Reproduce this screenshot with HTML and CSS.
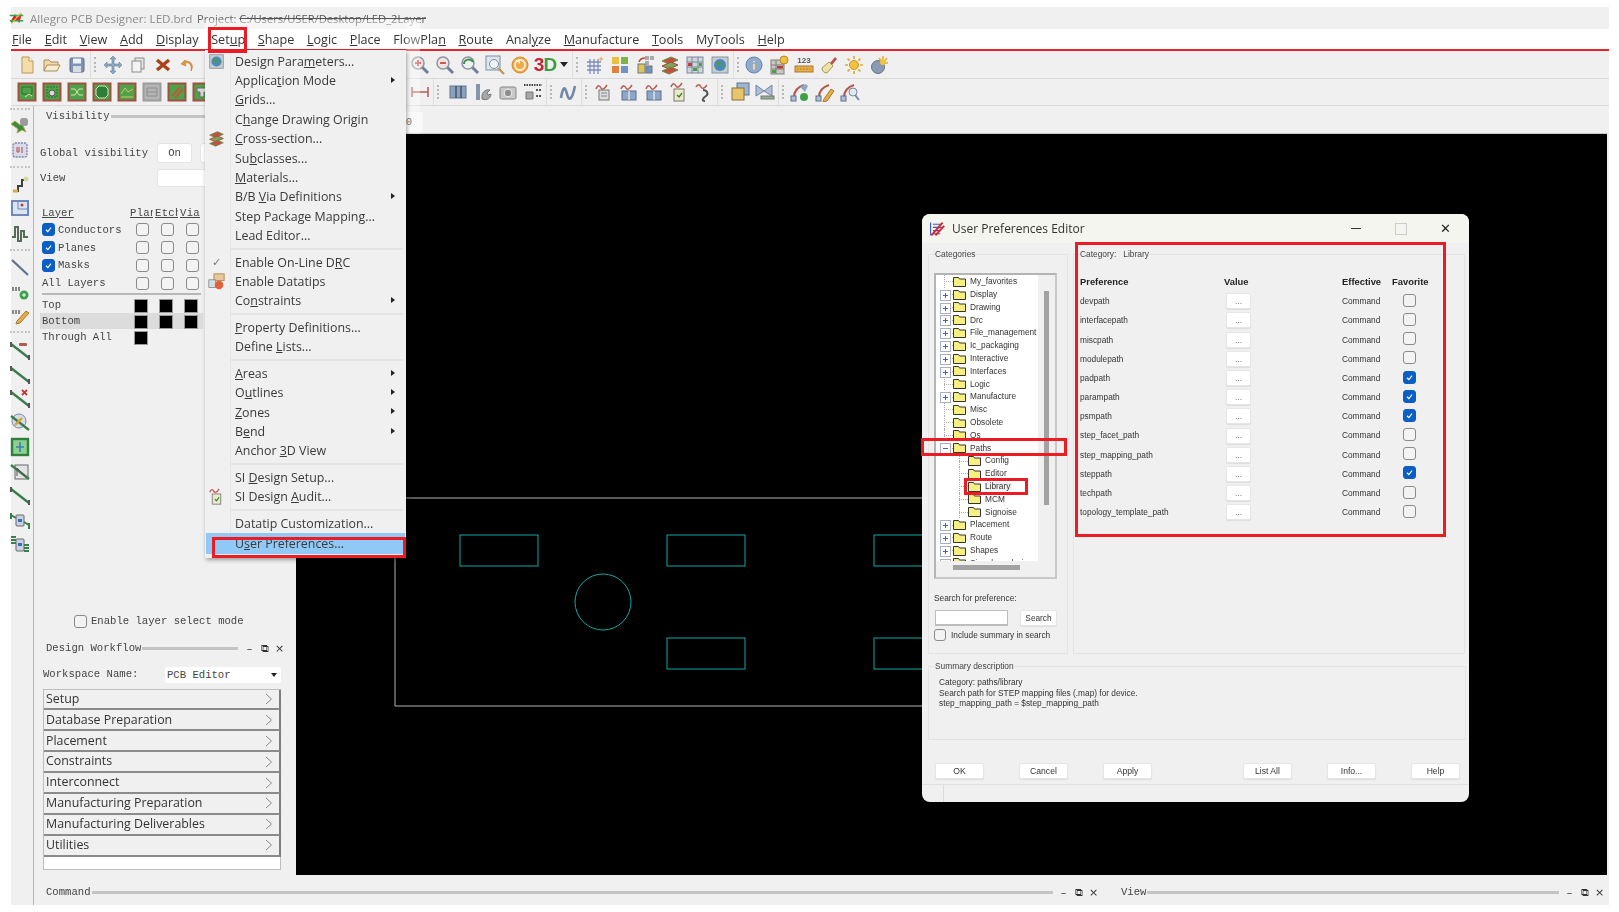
FILE: index.html
```html
<!DOCTYPE html>
<html lang="en">
<head>
<meta charset="utf-8">
<title>Allegro PCB Designer</title>
<link rel="stylesheet" href="styles.css">
</head>
<body>
<svg class="defs" width="0" height="0" aria-hidden="true">
  <defs>
    <symbol id="new" viewBox="0 0 20 20"><path d="M5 2h7l4 4v12H5z" fill="#f6dcab" stroke="#b9975f"/><path d="M12 2v4h4" fill="#fff" stroke="#b9975f"/></symbol>
    <symbol id="open" viewBox="0 0 20 20"><path d="M2 16V5h5l2 2h7v3" fill="#f3d9a8" stroke="#a98c5c"/><path d="M2 16l3-6h13l-3 6z" fill="#f8ecd0" stroke="#a98c5c"/></symbol>
    <symbol id="save" viewBox="0 0 20 20"><rect x="3" y="3" width="14" height="14" rx="1.5" fill="#7f93b5" stroke="#5a6c8c"/><rect x="6" y="3.5" width="8" height="5" fill="#eef1f6"/><rect x="6" y="11" width="8" height="6" fill="#d6dce6"/></symbol>
    <symbol id="move" viewBox="0 0 20 20"><path d="M10 1l3 3h-2v5h5V7l3 3-3 3v-2h-5v5h2l-3 3-3-3h2v-5H4v2l-3-3 3-3v2h5V4H7z" fill="#8ea9c6" stroke="#647f9c" stroke-width=".6"/></symbol>
    <symbol id="copy" viewBox="0 0 20 20"><rect x="7" y="3" width="9" height="11" fill="#e4e4e4" stroke="#8a8a8a"/><rect x="4" y="6" width="9" height="11" fill="#f3f3f3" stroke="#8a8a8a"/></symbol>
    <symbol id="del" viewBox="0 0 20 20"><path d="M4 5l12 10M16 5L4 15" stroke="#a8431a" stroke-width="3.4" fill="none"/></symbol>
    <symbol id="undo" viewBox="0 0 20 20"><path d="M7 5L3 9l5 2-1-3c4-1 7 1 6 8 3-5 1-10-6-10z" fill="#e59a3c" stroke="#b8742a" stroke-width=".6"/></symbol>
    <symbol id="zin" viewBox="0 0 20 20"><path d="M12 12l6 6" stroke="#6d7f99" stroke-width="3"/><circle cx="8" cy="8" r="6" fill="#f3e3de" stroke="#8b95a6" stroke-width="1.5"/><path d="M5 8h6M8 5v6" stroke="#c23a3a" stroke-width="1.6"/></symbol>
    <symbol id="zout" viewBox="0 0 20 20"><path d="M12 12l6 6" stroke="#6d7f99" stroke-width="3"/><circle cx="8" cy="8" r="6" fill="#f3e3de" stroke="#8b95a6" stroke-width="1.5"/><path d="M5 8h6" stroke="#c23a3a" stroke-width="1.6"/></symbol>
    <symbol id="zprev" viewBox="0 0 20 20"><path d="M12 12l6 6" stroke="#6d7f99" stroke-width="3"/><circle cx="8" cy="8" r="6" fill="#eef2ee" stroke="#8b95a6" stroke-width="1.5"/><path d="M4 9c0-5 7-6 9-2" stroke="#3f8f4a" stroke-width="2" fill="none"/></symbol>
    <symbol id="zfit" viewBox="0 0 20 20"><rect x="1" y="1" width="14" height="14" fill="#dde6ee" stroke="#7d8ea3"/><path d="M13 13l6 6" stroke="#c09a55" stroke-width="2.4"/><circle cx="9" cy="9" r="4.5" fill="#eef3f7" stroke="#7d8ea3"/></symbol>
    <symbol id="redo" viewBox="0 0 20 20"><circle cx="10" cy="10" r="8" fill="#f0a94a" stroke="#d98d2c"/><circle cx="10" cy="10" r="5" fill="none" stroke="#fff2dc" stroke-width="1.8"/><path d="M5 5h5v4z" fill="#fff2dc"/></symbol>
    <symbol id="grid" viewBox="0 0 20 20"><path d="M2 7h14M2 11h14M2 15h14M5 4v15M9 4v15M13 4v15" stroke="#7e8db8" stroke-width="1.3"/><path d="M16 1l.8 2.2L19 4l-2.2.8L16 7l-.8-2.2L13 4l2.2-.8z" fill="#e9b36a"/></symbol>
    <symbol id="color" viewBox="0 0 20 20"><rect x="2" y="2" width="7" height="7" fill="#e8c23a"/><rect x="11" y="2" width="7" height="7" fill="#7fb24f"/><rect x="2" y="11" width="7" height="7" fill="#e0823c"/><rect x="11" y="11" width="7" height="7" fill="#6f93c9"/></symbol>
    <symbol id="shapes" viewBox="0 0 20 20"><rect x="10" y="1" width="4" height="4" fill="#aaa"/><rect x="15" y="1" width="4" height="4" fill="#aaa"/><rect x="10" y="6" width="4" height="4" fill="#aaa"/><rect x="3" y="9" width="7" height="9" fill="#d9c65c" stroke="#777"/><rect x="11" y="11" width="6" height="7" fill="#6f93c9" stroke="#777"/><path d="M4 7c1-3 3-4 6-4" stroke="#c2443a" stroke-width="1.4" fill="none"/></symbol>
    <symbol id="stack" viewBox="0 0 20 20"><path d="M2 6l9-4 7 3-9 4z" fill="#c2503e" stroke="#6b8c4a"/><path d="M2 11l9-4 7 3-9 4z" fill="#7fa35a" stroke="#a3462f"/><path d="M2 16l9-4 7 3-9 4z" fill="#c2503e" stroke="#6b8c4a"/></symbol>
    <symbol id="table" viewBox="0 0 20 20"><rect x="2" y="2" width="16" height="16" fill="#cfd5dc" stroke="#7b8796"/><path d="M2 7h16M2 12h16M7 2v16M13 2v16" stroke="#7b8796"/><rect x="3" y="8" width="4" height="3" fill="#c23a3a"/><rect x="8" y="13" width="4" height="3" fill="#4aa04a"/><rect x="14" y="8" width="3" height="3" fill="#4aa04a"/></symbol>
    <symbol id="globe" viewBox="0 0 20 20"><rect x="2" y="2" width="16" height="16" fill="#c6ccd4" stroke="#8a94a1"/><circle cx="10" cy="10" r="6" fill="#4b89b8"/><path d="M6 8l4-2 1 3-3 3zM12 11l3-1-1 4z" fill="#4f9b52"/></symbol>
    <symbol id="info" viewBox="0 0 20 20"><circle cx="10" cy="10" r="8" fill="#8fabd0" stroke="#6b83a8"/><path d="M10 6v1.6M10 9v5.5" stroke="#f5d88a" stroke-width="2"/></symbol>
    <symbol id="tinfo" viewBox="0 0 20 20"><rect x="2" y="5" width="13" height="14" fill="#c9c9c0" stroke="#7f7f7f"/><path d="M2 10h13M2 14h13M7 5v14" stroke="#7f7f7f"/><rect x="8" y="11" width="6" height="2.5" fill="#c23a3a"/><rect x="3" y="15" width="4" height="3" fill="#4aa04a"/><circle cx="15" cy="5" r="4" fill="#f0c040" stroke="#b88a20"/></symbol>
    <symbol id="num" viewBox="0 0 20 20"><rect x="1" y="11" width="18" height="6" fill="#e5ad4a" stroke="#a87a2a"/><path d="M3 14h14" stroke="#a87a2a" stroke-dasharray="1.5 1.5"/></symbol>
    <symbol id="brush" viewBox="0 0 20 20"><path d="M11 8l5-6 2 2-5 6z" fill="#b5574a"/><path d="M3 13l7-6 4 4-6 7c-3 0-5-2-5-5z" fill="#efe2a8" stroke="#a89a5a"/></symbol>
    <symbol id="sun" viewBox="0 0 20 20"><circle cx="10" cy="10" r="4.5" fill="#f3c23c" stroke="#c9912a"/><path d="M10 1v3M10 16v3M1 10h3M16 10h3M3.6 3.6l2.1 2.1M14.3 14.3l2.1 2.1M3.6 16.4l2.1-2.1M14.3 5.7l2.1-2.1" stroke="#e5a83a" stroke-width="1.7"/></symbol>
    <symbol id="sun2" viewBox="0 0 20 20"><circle cx="9" cy="12" r="6.5" fill="#8a9ab0" stroke="#64748a"/><path d="M14 1v3M10 3l1.6 2M18 3l-1.6 2M19 8h-3" stroke="#e5a83a" stroke-width="1.5"/><circle cx="14" cy="7" r="3" fill="#f3c23c"/></symbol>
    <symbol id="gb1" viewBox="0 0 20 20"><rect x="1.5" y="1.5" width="17" height="17" fill="#4ea24a" stroke="#a24f42" stroke-width="2"/><path d="M5 5h10v7H5z" fill="none" stroke="#2c6e2c"/><path d="M8 15l4-3 3 2" stroke="#d8e8a8" fill="none"/></symbol>
    <symbol id="gb2" viewBox="0 0 20 20"><rect x="1.5" y="1.5" width="17" height="17" fill="#4ea24a" stroke="#a24f42" stroke-width="2"/><path d="M5 5h10v10H5z" fill="none" stroke="#2c6e2c" stroke-dasharray="2 1"/><circle cx="10" cy="11" r="3" fill="#d8d8d8" stroke="#555"/></symbol>
    <symbol id="gb3" viewBox="0 0 20 20"><rect x="1.5" y="1.5" width="17" height="17" fill="#4ea24a" stroke="#a24f42" stroke-width="2"/><path d="M4 7h4l4 6h4M4 13h4l4-6h4" fill="none" stroke="#d8e8a8"/></symbol>
    <symbol id="gb4" viewBox="0 0 20 20"><rect x="1.5" y="1.5" width="17" height="17" fill="#4ea24a" stroke="#a24f42" stroke-width="2"/><path d="M7 4h6l3 3v6l-3 3H7l-3-3V7z" fill="#2f7d3a" stroke="#cfe8b0"/></symbol>
    <symbol id="gb5" viewBox="0 0 20 20"><rect x="1.5" y="1.5" width="17" height="17" fill="#4ea24a" stroke="#a24f42" stroke-width="2"/><path d="M4 12l4-6 3 4 5-3M4 15h12" fill="none" stroke="#d8c060"/></symbol>
    <symbol id="gdim" viewBox="0 0 20 20"><rect x="1.5" y="1.5" width="17" height="17" fill="#b5b5b5" stroke="#9c9c9c" stroke-width="2"/><path d="M5 6h10v8H5zM5 10h10" fill="none" stroke="#8a8a8a"/></symbol>
    <symbol id="gslash" viewBox="0 0 20 20"><rect x="1.5" y="1.5" width="17" height="17" fill="#4ea24a" stroke="#a24f42" stroke-width="2"/><path d="M5 14l8-9M8 16l8-9" stroke="#bf5a3a" stroke-width="2"/></symbol>
    <symbol id="gt" viewBox="0 0 20 20"><rect x="1.5" y="1.5" width="17" height="17" fill="#4ea24a" stroke="#a24f42" stroke-width="2"/><path d="M5 6h10v4h-3v5H8v-5H5z" fill="#d8d8d8" stroke="#666"/></symbol>
    <symbol id="dim" viewBox="0 0 20 20"><path d="M2 5v10M18 5v10" stroke="#b5645a" stroke-width="1.6"/><path d="M2 10h16" stroke="#b5645a" stroke-width="1.6"/></symbol>
    <symbol id="book" viewBox="0 0 20 20"><rect x="2" y="4" width="16" height="12" fill="#8ba2bf" stroke="#64748a"/><path d="M8 4v12M13 4v12" stroke="#46566c" stroke-width="1.5"/></symbol>
    <symbol id="tool" viewBox="0 0 20 20"><path d="M3 2h4v16H3z" fill="#8696aa"/><path d="M9 14c0-4 4-7 8-6l-3 3 1 2 3-1c0 4-4 7-9 5z" fill="#a7a7a7" stroke="#777"/></symbol>
    <symbol id="camera" viewBox="0 0 20 20"><rect x="2" y="5" width="16" height="12" rx="1.5" fill="#c9c9c9" stroke="#858585"/><circle cx="10" cy="11" r="3.8" fill="#8d8d8d" stroke="#eee"/></symbol>
    <symbol id="bits" viewBox="0 0 20 20"><path d="M1 3h18" stroke="#444" stroke-dasharray="1.5 1" stroke-width="2"/><path d="M3 10h7v7H3z" fill="#a7a7a7" stroke="#777"/><path d="M13 8h6M13 14h6" stroke="#555" stroke-width="2" stroke-dasharray="2 1"/></symbol>
    <symbol id="net" viewBox="0 0 20 20"><path d="M3 16c2-12 4-12 6-4s5 6 8-8" stroke="#7388a6" stroke-width="2.6" fill="none"/></symbol>
    <symbol id="wire" viewBox="0 0 20 20"><path d="M2 7c2-5 4-3 5-1s3 2 6-3" stroke="#bc5a50" stroke-width="1.5" fill="none"/><rect x="5" y="8" width="10" height="10" fill="#dcdcdc" stroke="#777"/><path d="M7 11h6M7 14h6" stroke="#888"/></symbol>
    <symbol id="wire2" viewBox="0 0 20 20"><path d="M2 7c2-5 4-3 5-1s3 2 6-3" stroke="#bc5a50" stroke-width="1.5" fill="none"/><rect x="3" y="9" width="14" height="9" fill="#8fa7c6" stroke="#5c6f8c"/><path d="M10 9v9" stroke="#fff"/></symbol>
    <symbol id="wire3" viewBox="0 0 20 20"><path d="M2 5c2-4 4-2 5 0s3 2 6-2" stroke="#bc5a50" stroke-width="1.5" fill="none"/><path d="M9 8c4 0 6 4 3 6s-5 5-1 5" stroke="#555" stroke-width="2" fill="none"/></symbol>
    <symbol id="pages" viewBox="0 0 20 20"><rect x="7" y="1" width="12" height="12" fill="#9db4d3" stroke="#64748a"/><rect x="2" y="6" width="12" height="12" fill="#e9c46a" stroke="#8a7040"/></symbol>
    <symbol id="bow" viewBox="0 0 20 20"><path d="M1 3l8 6 8-6v11l-8-5-8 5z" fill="#aebfd6" stroke="#7388a6"/><rect x="6" y="14" width="13" height="3" fill="#9a9" stroke="#777"/></symbol>
    <symbol id="via" viewBox="0 0 20 20"><path d="M4 15c0-7 4-10 10-12" stroke="#b5584a" stroke-width="2" fill="none"/><path d="M10 5l6-3 2 2-3 6z" fill="#8fa7c6"/><rect x="1" y="14" width="5" height="5" fill="#aebfd6" stroke="#5c6f8c"/><circle cx="14" cy="15" r="4" fill="#3fa04a"/></symbol>
    <symbol id="via2" viewBox="0 0 20 20"><path d="M4 15c0-7 4-10 10-12" stroke="#b5584a" stroke-width="2" fill="none"/><rect x="1" y="14" width="5" height="5" fill="#aebfd6" stroke="#5c6f8c"/><path d="M9 17l7-10 3 2-7 10-4 1z" fill="#e5ad4a" stroke="#a87a2a"/></symbol>
    <symbol id="via3" viewBox="0 0 20 20"><path d="M4 15c0-7 4-10 10-12" stroke="#b5584a" stroke-width="2" fill="none"/><rect x="1" y="14" width="5" height="5" fill="#aebfd6" stroke="#5c6f8c"/><circle cx="13" cy="10" r="4" fill="#e4e8ee" stroke="#7388a6"/><path d="M15 13l4 5" stroke="#7388a6" stroke-width="2"/></symbol>
    <symbol id="lay" viewBox="0 0 20 20"><path d="M1 8l7 5-1 4 5-3 4 2-3-6 2-3-5 2-5-4z" fill="#3d8c3d" stroke="#b8a44a"/><rect x="10" y="2" width="8" height="8" rx="3" fill="#9b9b9b"/></symbol>
    <symbol id="u1" viewBox="0 0 20 20"><rect x="3" y="3" width="14" height="14" rx="2" fill="#d9dce8" stroke="#7d86a8" stroke-dasharray="2 1" stroke-width="1.4"/><path d="M7 7v5h2V7M12 7v6" stroke="#b04a4a" fill="none"/></symbol>
    <symbol id="trace" viewBox="0 0 20 20"><path d="M3 17h5v-5h4V6h5" stroke="#3d3d3d" stroke-width="2" fill="none"/><path d="M3 17h5" stroke="#d8b030" stroke-width="3"/><circle cx="16" cy="5" r="2.5" fill="#d8d8a0"/></symbol>
    <symbol id="plane" viewBox="0 0 20 20"><path d="M2 3h16v14H2z" fill="#dbe4f2" stroke="#6f88b8" stroke-width="2"/><path d="M8 4v7h9" stroke="#6f88b8" fill="none"/><circle cx="12" cy="7" r="1.5" fill="#c23a3a"/></symbol>
    <symbol id="pulse" viewBox="0 0 20 20"><path d="M2 14h3V4h3v14h3V8h3v6h4" stroke="#5a6a5a" stroke-width="2" fill="none"/></symbol>
    <symbol id="line" viewBox="0 0 20 20"><path d="M2 3l16 15" stroke="#5f7391" stroke-width="2.2"/></symbol>
    <symbol id="abcp" viewBox="0 0 20 20"><path d="M2 8h9" stroke="#888" stroke-width="4" stroke-dasharray="2 1"/><circle cx="14" cy="14" r="4.5" fill="#3fa04a"/><path d="M12 14h4M14 12v4" stroke="#fff"/></symbol>
    <symbol id="abce" viewBox="0 0 20 20"><path d="M2 7h9" stroke="#888" stroke-width="4" stroke-dasharray="2 1"/><path d="M7 16l9-10 3 2-9 10-4 1z" fill="#e5ad4a" stroke="#a87a2a"/></symbol>
    <symbol id="n1" viewBox="0 0 20 20"><path d="M1 4l18 14" stroke="#3b7d4a" stroke-width="2.4"/><path d="M1 2v5M19 15v5" stroke="#555" stroke-width="2"/><rect x="9" y="3" width="8" height="3" rx="1" fill="#b5584a"/></symbol>
    <symbol id="n2" viewBox="0 0 20 20"><path d="M1 4l18 14" stroke="#3b7d4a" stroke-width="2.4"/><path d="M1 2v5M19 15v5" stroke="#555" stroke-width="2"/></symbol>
    <symbol id="n3" viewBox="0 0 20 20"><path d="M1 4l18 14" stroke="#3b7d4a" stroke-width="2.4"/><path d="M1 2v5M19 15v5" stroke="#555" stroke-width="2"/><path d="M12 2l5 5M17 2l-5 5" stroke="#c23a3a" stroke-width="1.8"/></symbol>
    <symbol id="n4" viewBox="0 0 20 20"><circle cx="9" cy="9" r="7" fill="#d8dce4" stroke="#7d86a8"/><path d="M1 4l18 14" stroke="#3b7d4a" stroke-width="2.4"/><path d="M5 13l7-7" stroke="#d8a030" stroke-width="2.4"/></symbol>
    <symbol id="n5" viewBox="0 0 20 20"><rect x="2" y="2" width="16" height="16" fill="#8fcf8f" stroke="#2f7f3f" stroke-width="2.4"/><path d="M10 5v10M6 10h8" stroke="#3a7fb8" stroke-width="1.6"/></symbol>
    <symbol id="n6" viewBox="0 0 20 20"><rect x="5" y="4" width="13" height="14" fill="#e4e4e4" stroke="#666"/><path d="M1 4l18 14" stroke="#3b7d4a" stroke-width="2.4"/><path d="M7 15V7l9 9" stroke="#555" fill="none"/></symbol>
    <symbol id="n7" viewBox="0 0 20 20"><rect x="6" y="5" width="8" height="11" rx="1" fill="#c8d2e4" stroke="#666"/><rect x="8" y="9" width="4" height="3" fill="#3a6fb8"/><path d="M1 3v6M19 13v6M1 5l5 3M14 12l5 3" stroke="#3b7d4a" stroke-width="2"/></symbol>
    <symbol id="n8" viewBox="0 0 20 20"><rect x="6" y="5" width="8" height="12" rx="1" fill="#c8d2e4" stroke="#666"/><rect x="8" y="9" width="4" height="3" fill="#3a6fb8"/><path d="M1 3h5M1 6h5M1 9h5M14 11h5M14 14h5M14 17h5" stroke="#3b7d4a" stroke-width="2"/></symbol>
    <symbol id="datatip" viewBox="0 0 20 20"><rect x="7" y="1" width="12" height="8" fill="#e9c89a" stroke="#a8844f"/><rect x="1" y="8" width="8" height="9" fill="#d8dce4" stroke="#8a8a8a"/><circle cx="13" cy="14" r="5" fill="#e2603a"/></symbol>
    <symbol id="audit" viewBox="0 0 20 20"><path d="M2 5c2-5 4-3 5-1s3 2 6-3" stroke="#bc5a50" stroke-width="1.5" fill="none"/><rect x="5" y="7" width="10" height="12" fill="#efe9c8" stroke="#777"/><path d="M8 13l2 2 3-4" stroke="#2e8a3c" stroke-width="1.4" fill="none"/></symbol>
    <symbol id="logo" viewBox="0 0 20 20"><path d="M2 2v16M5 4h11M5 8h11M5 12h9M5 16h9" stroke="#3f56c0" stroke-width="1.4"/><path d="M3 18L17 2M8 18L19 6" stroke="#d9252a" stroke-width="2.4"/></symbol>
    <symbol id="appicon" viewBox="0 0 20 20"><path d="M2 14l6-10 3 5 6-6-3 13-5-5-5 5z" fill="#d9252a"/><path d="M1 6h18M1 13h18" stroke="#2ea84a" stroke-width="2"/><path d="M3 17L16 2" stroke="#e8c23a" stroke-width="1.4"/></symbol>
    <symbol id="folder" viewBox="0 0 13 11"><path d="M.5 10.5V1.5h5l1 1.5h6v7.5z" fill="#f7ef82" stroke="#333" stroke-width="1"/></symbol>
    <symbol id="tick" viewBox="0 0 13 13"><path d="M3.5 6.8l2.2 2.2 3.8-4.6" fill="none" stroke="#fff" stroke-width="1.3"/></symbol>
    <symbol id="chev" viewBox="0 0 8 12"><path d="M1 1l5.5 5L1 11" fill="none" stroke="#8a8a8a" stroke-width="1"/></symbol>
  </defs>
</svg>

<div class="app">
  <header class="titlebar">
    <svg class="app-icon"><use href="#appicon"/></svg>
    <span class="title-main">Allegro PCB Designer: LED.brd</span>
    <span class="title-project">Project: <s>C:/Users/USER/Desktop/LED_2Layer</s></span>
  </header>

  <nav class="menubar">
    <span class="m-file"><u>F</u>ile</span>
    <span><u>E</u>dit</span>
    <span><u>V</u>iew</span>
    <span><u>A</u>dd</span>
    <span><u>D</u>isplay</span>
    <span>Set<u>u</u>p</span>
    <span><u>S</u>hape</span>
    <span><u>L</u>ogic</span>
    <span><u>P</u>lace</span>
    <span>FlowPla<u>n</u></span>
    <span><u>R</u>oute</span>
    <span>Anal<u>y</u>ze</span>
    <span><u>M</u>anufacture</span>
    <span><u>T</u>ools</span>
    <span>MyTools</span>
    <span><u>H</u>elp</span>
  </nav>

  <div class="toolbar">
    <i class="tb"><svg><use href="#new"/></svg></i>
    <i class="tb"><svg><use href="#open"/></svg></i>
    <i class="tb"><svg><use href="#save"/></svg></i>
    <i class="sep s11"></i>
    <i class="tb"><svg><use href="#move"/></svg></i>
    <i class="tb"><svg><use href="#copy"/></svg></i>
    <i class="tb"><svg><use href="#del"/></svg></i>
    <i class="tb"><svg><use href="#undo"/></svg></i>
    <i class="tb-hidden"></i>
    <i class="tb"><svg><use href="#zin"/></svg></i>
    <i class="tb"><svg><use href="#zout"/></svg></i>
    <i class="tb"><svg><use href="#zprev"/></svg></i>
    <i class="tb"><svg><use href="#zfit"/></svg></i>
    <i class="tb"><svg><use href="#redo"/></svg></i>
    <i class="tb three-d"><b class="r">3</b><b class="g">D</b></i>
    <i class="drop"></i>
    <i class="sep s11"></i>
    <i class="tb"><svg><use href="#grid"/></svg></i>
    <i class="tb"><svg><use href="#color"/></svg></i>
    <i class="tb"><svg><use href="#shapes"/></svg></i>
    <i class="tb"><svg><use href="#stack"/></svg></i>
    <i class="tb"><svg><use href="#table"/></svg></i>
    <i class="tb"><svg><use href="#globe"/></svg></i>
    <i class="sep s9"></i>
    <i class="tb"><svg><use href="#info"/></svg></i>
    <i class="tb"><svg><use href="#tinfo"/></svg></i>
    <i class="tb num-icon"><small>123</small><svg><use href="#num"/></svg></i>
    <i class="tb"><svg><use href="#brush"/></svg></i>
    <i class="tb"><svg><use href="#sun"/></svg></i>
    <i class="tb"><svg><use href="#sun2"/></svg></i>
  </div>

  <div class="toolbar">
    <i class="tb"><svg><use href="#gb1"/></svg></i>
    <i class="tb"><svg><use href="#gb2"/></svg></i>
    <i class="tb"><svg><use href="#gb3"/></svg></i>
    <i class="tb"><svg><use href="#gb4"/></svg></i>
    <i class="tb"><svg><use href="#gb5"/></svg></i>
    <i class="tb"><svg><use href="#gdim"/></svg></i>
    <i class="tb"><svg><use href="#gslash"/></svg></i>
    <i class="tb"><svg><use href="#gt"/></svg></i>
    <i class="tb-hidden2"></i>
    <i class="tb"><svg><use href="#dim"/></svg></i>
    <i class="sep s13"></i>
    <i class="tb"><svg><use href="#book"/></svg></i>
    <i class="tb"><svg><use href="#tool"/></svg></i>
    <i class="tb"><svg><use href="#camera"/></svg></i>
    <i class="tb"><svg><use href="#bits"/></svg></i>
    <i class="sep s10"></i>
    <i class="tb"><svg><use href="#net"/></svg></i>
    <i class="sep s11"></i>
    <i class="tb"><svg><use href="#wire"/></svg></i>
    <i class="tb"><svg><use href="#wire2"/></svg></i>
    <i class="tb"><svg><use href="#wire2"/></svg></i>
    <i class="tb"><svg><use href="#audit"/></svg></i>
    <i class="tb"><svg><use href="#wire3"/></svg></i>
    <i class="sep s11"></i>
    <i class="tb"><svg><use href="#pages"/></svg></i>
    <i class="tb"><svg><use href="#bow"/></svg></i>
    <i class="sep s10"></i>
    <i class="tb"><svg><use href="#via"/></svg></i>
    <i class="tb"><svg><use href="#via2"/></svg></i>
    <i class="tb"><svg><use href="#via3"/></svg></i>
  </div>

  <div class="work">
    <aside class="strip">
      <i class="grip"></i>
      <svg class="st"><use href="#lay"/></svg>
      <svg class="st"><use href="#u1"/></svg>
      <i class="grip"></i>
      <svg class="st"><use href="#trace"/></svg>
      <svg class="st"><use href="#plane"/></svg>
      <svg class="st"><use href="#pulse"/></svg>
      <i class="grip"></i>
      <svg class="st"><use href="#line"/></svg>
      <svg class="st"><use href="#abcp"/></svg>
      <svg class="st"><use href="#abce"/></svg>
      <i class="grip"></i>
      <svg class="st"><use href="#n1"/></svg>
      <svg class="st"><use href="#n2"/></svg>
      <svg class="st"><use href="#n3"/></svg>
      <svg class="st"><use href="#n4"/></svg>
      <svg class="st"><use href="#n5"/></svg>
      <svg class="st"><use href="#n6"/></svg>
      <svg class="st"><use href="#n2"/></svg>
      <svg class="st"><use href="#n7"/></svg>
      <svg class="st"><use href="#n8"/></svg>
    </aside>

    <div class="main">
      <div class="upper">
        <section class="panel">
          <div class="dock-head vis-head"><span>Visibility</span><i class="rule"></i></div>

          <div class="global-row">
            <span class="global-label">Global visibility</span>
            <span class="flat-btn">On</span>
            <span class="flat-btn off">Off</span>
          </div>
          <div class="view-row">
            <span class="view-label">View</span>
            <span class="view-field"></span>
          </div>

          <div class="layers">
            <u>Layer</u><u class="clip">Plan</u><u class="clip">Etch</u><u class="clip">Via</u>
            <span>
              <i class="cb on"><svg><use href="#tick"/></svg></i>Conductors</span>
            <i class="cb c"></i><i class="cb c"></i><i class="cb c"></i>
            <span>
              <i class="cb on"><svg><use href="#tick"/></svg></i>Planes</span>
            <i class="cb c"></i><i class="cb c"></i><i class="cb c"></i>
            <span>
              <i class="cb on"><svg><use href="#tick"/></svg></i>Masks</span>
            <i class="cb c"></i><i class="cb c"></i><i class="cb c"></i>
            <span>All Layers</span>
            <i class="cb c"></i><i class="cb c"></i><i class="cb c"></i>
          </div>
          <div class="layers-rule"></div>
          <div class="subclasses">
            <span>Top</span><i class="sq"></i><i class="sq"></i><i class="sq"></i>
            <span class="sel">Bottom</span><i class="sq sel"></i><i class="sq sel"></i><i class="sq sel"></i>
            <span>Through All</span><i class="sq"></i><i></i><i></i>
          </div>

          <label class="enable-row"><i class="cb"></i>Enable layer select mode</label>

          <div class="dock-head wf-head">
            <span>Design Workflow</span><i class="rule"></i>
            <span class="dock-ctl">–</span><span class="dock-ctl">⧉</span><span class="dock-ctl">×</span>
          </div>
          <div class="workspace">
            <span>Workspace Name:</span>
            <span class="select">PCB Editor<i class="select-arrow"></i></span>
          </div>
          <ul class="workflow">
            <li>Setup<svg><use href="#chev"/></svg></li>
            <li>Database Preparation<svg><use href="#chev"/></svg></li>
            <li>Placement<svg><use href="#chev"/></svg></li>
            <li>Constraints<svg><use href="#chev"/></svg></li>
            <li>Interconnect<svg><use href="#chev"/></svg></li>
            <li>Manufacturing Preparation<svg><use href="#chev"/></svg></li>
            <li>Manufacturing Deliverables<svg><use href="#chev"/></svg></li>
            <li>Utilities<svg><use href="#chev"/></svg></li>
          </ul>
          <div class="workflow-tail"></div>
        </section>

        <section class="canvas-col">
          <div class="canvas-top"><span class="canvas-field">0</span></div>
          <div class="canvas">
            <svg class="board" viewBox="0 0 1311 741">
              <path class="outline" d="M99 364H640M99 364V572H640"/>
              <rect class="pad" x="164" y="401" width="78" height="31"/>
              <rect class="pad" x="371" y="401" width="78" height="31"/>
              <rect class="pad" x="578" y="401" width="78" height="31"/>
              <rect class="pad" x="371" y="504" width="78" height="31"/>
              <rect class="pad" x="578" y="504" width="78" height="31"/>
              <circle class="pad" cx="307" cy="468" r="28"/>
            </svg>
          </div>
        </section>
      </div>

      <footer class="cmdbar">
        <div class="cmd-left dock-head">
          <span>Command</span><i class="rule"></i>
          <span class="dock-ctl">–</span><span class="dock-ctl">⧉</span><span class="dock-ctl">×</span>
        </div>
        <div class="cmd-right dock-head">
          <span>View</span><i class="rule"></i>
          <span class="dock-ctl">–</span><span class="dock-ctl">⧉</span><span class="dock-ctl">×</span>
        </div>
      </footer>
    </div>
  </div>

  <div class="menu-ghost"></div>

  <div class="menu">
    <div class="mi"><svg class="mic"><use href="#globe"/></svg><span>Design Para<u>m</u>eters...</span></div>
    <div class="mi sub"><i class="mic"></i><span>Applica<u>t</u>ion Mode</span></div>
    <div class="mi"><i class="mic"></i><span><u>G</u>rids...</span></div>
    <div class="mi"><i class="mic"></i><span>C<u>h</u>ange Drawing Origin</span></div>
    <div class="mi"><svg class="mic"><use href="#stack"/></svg><span><u>C</u>ross-section...</span></div>
    <div class="mi"><i class="mic"></i><span>Su<u>b</u>classes...</span></div>
    <div class="mi"><i class="mic"></i><span><u>M</u>aterials...</span></div>
    <div class="mi sub"><i class="mic"></i><span>B/B <u>V</u>ia Definitions</span></div>
    <div class="mi"><i class="mic"></i><span>Step Package Mapping...</span></div>
    <div class="mi"><i class="mic"></i><span>Lead Editor...</span></div>
    <div class="msep"></div>
    <div class="mi"><i class="mic check">✓</i><span>Enable On-Line D<u>R</u>C</span></div>
    <div class="mi"><svg class="mic"><use href="#datatip"/></svg><span>Enable Datatips</span></div>
    <div class="mi sub"><i class="mic"></i><span>Co<u>n</u>straints</span></div>
    <div class="msep"></div>
    <div class="mi"><i class="mic"></i><span><u>P</u>roperty Definitions...</span></div>
    <div class="mi"><i class="mic"></i><span>Define <u>L</u>ists...</span></div>
    <div class="msep"></div>
    <div class="mi sub"><i class="mic"></i><span><u>A</u>reas</span></div>
    <div class="mi sub"><i class="mic"></i><span>O<u>u</u>tlines</span></div>
    <div class="mi sub"><i class="mic"></i><span><u>Z</u>ones</span></div>
    <div class="mi sub"><i class="mic"></i><span>B<u>e</u>nd</span></div>
    <div class="mi"><i class="mic"></i><span>Anchor <u>3</u>D View</span></div>
    <div class="msep"></div>
    <div class="mi"><i class="mic"></i><span>SI <u>D</u>esign Setup...</span></div>
    <div class="mi"><svg class="mic"><use href="#audit"/></svg><span>SI Design <u>A</u>udit...</span></div>
    <div class="msep"></div>
    <div class="mi"><i class="mic"></i><span>Datatip Customization...</span></div>
    <div class="mi active"><i class="mic"></i><span>U<u>s</u>er Preferences...</span></div>
  </div>
</div>

<div class="dialog">
  <div class="dlg-title">
    <svg class="dlg-logo"><use href="#logo"/></svg>
    <span class="dlg-name">User Preferences Editor</span>
    <span class="win-btn min"></span>
    <span class="win-btn max"></span>
    <span class="win-btn close">✕</span>
  </div>
  <div class="dlg-body">
    <div class="dlg-top">
      <fieldset class="group cats">
        <legend>Categories</legend>
        <div class="tree">
          <div class="tree-top">
            <ul class="tree-list">
              <li><i class="tx"></i><svg><use href="#folder"/></svg>My_favorites</li>
              <li><i class="tx plus"></i><svg><use href="#folder"/></svg>Display</li>
              <li><i class="tx plus"></i><svg><use href="#folder"/></svg>Drawing</li>
              <li><i class="tx plus"></i><svg><use href="#folder"/></svg>Drc</li>
              <li><i class="tx plus"></i><svg><use href="#folder"/></svg>File_management</li>
              <li><i class="tx plus"></i><svg><use href="#folder"/></svg>Ic_packaging</li>
              <li><i class="tx plus"></i><svg><use href="#folder"/></svg>Interactive</li>
              <li><i class="tx plus"></i><svg><use href="#folder"/></svg>Interfaces</li>
              <li><i class="tx"></i><svg><use href="#folder"/></svg>Logic</li>
              <li><i class="tx plus"></i><svg><use href="#folder"/></svg>Manufacture</li>
              <li><i class="tx"></i><svg><use href="#folder"/></svg>Misc</li>
              <li><i class="tx"></i><svg><use href="#folder"/></svg>Obsolete</li>
              <li><i class="tx"></i><svg><use href="#folder"/></svg>Os</li>
              <li><i class="tx minus"></i><svg><use href="#folder"/></svg>Paths</li>
              <li class="lv2"><i class="tx"></i><svg><use href="#folder"/></svg>Config</li>
              <li class="lv2"><i class="tx"></i><svg><use href="#folder"/></svg>Editor</li>
              <li class="lv2 picked"><i class="tx"></i><svg><use href="#folder"/></svg><span>Library</span></li>
              <li class="lv2"><i class="tx"></i><svg><use href="#folder"/></svg>MCM</li>
              <li class="lv2"><i class="tx"></i><svg><use href="#folder"/></svg>Signoise</li>
              <li><i class="tx plus"></i><svg><use href="#folder"/></svg>Placement</li>
              <li><i class="tx plus"></i><svg><use href="#folder"/></svg>Route</li>
              <li><i class="tx plus"></i><svg><use href="#folder"/></svg>Shapes</li>
              <li><i class="tx plus"></i><svg><use href="#folder"/></svg>Signal_analysis</li>
            </ul>
            <div class="vscroll"><i></i></div>
          </div>
          <div class="hscroll"><i></i></div>
        </div>
        <div class="search-label">Search for preference:</div>
        <div class="search-row"><span class="search-input"></span><span class="btn search-btn">Search</span></div>
        <label class="include"><i class="cb small"></i>Include summary in search</label>
      </fieldset>

      <fieldset class="group prefs">
        <legend>Category:&nbsp;&nbsp; Library</legend>
        <div class="pref-grid">
          <b>Preference</b><b class="val-h">Value</b><b>Effective</b><b class="fav-h">Favorite</b>
          <span>devpath</span><span class="btn dots">...</span><span>Command</span><i class="cb"></i>
          <span>interfacepath</span><span class="btn dots">...</span><span>Command</span><i class="cb"></i>
          <span>miscpath</span><span class="btn dots">...</span><span>Command</span><i class="cb"></i>
          <span>modulepath</span><span class="btn dots">...</span><span>Command</span><i class="cb"></i>
          <span>padpath</span><span class="btn dots">...</span><span>Command</span><i class="cb on"><svg><use href="#tick"/></svg></i>
          <span>parampath</span><span class="btn dots">...</span><span>Command</span><i class="cb on"><svg><use href="#tick"/></svg></i>
          <span>psmpath</span><span class="btn dots">...</span><span>Command</span><i class="cb on"><svg><use href="#tick"/></svg></i>
          <span>step_facet_path</span><span class="btn dots">...</span><span>Command</span><i class="cb"></i>
          <span>step_mapping_path</span><span class="btn dots">...</span><span>Command</span><i class="cb"></i>
          <span>steppath</span><span class="btn dots">...</span><span>Command</span><i class="cb on"><svg><use href="#tick"/></svg></i>
          <span>techpath</span><span class="btn dots">...</span><span>Command</span><i class="cb"></i>
          <span>topology_template_path</span><span class="btn dots">...</span><span>Command</span><i class="cb"></i>
        </div>
      </fieldset>
    </div>

    <fieldset class="group summary">
      <legend>Summary description</legend>
      <p>Category: paths/library<br>Search path for STEP mapping files (.map) for device.<br>step_mapping_path = $step_mapping_path</p>
    </fieldset>

    <div class="dlg-buttons">
      <span class="btn">OK</span><span class="btn">Cancel</span><span class="btn">Apply</span>
      <span class="btn push">List All</span><span class="btn">Info...</span><span class="btn">Help</span>
    </div>
  </div>
  <div class="dlg-status"><i></i></div>
</div>

<div class="mark mark-setup"></div>
<div class="mark mark-user"></div>
<div class="mark mark-paths"></div>
<div class="mark mark-library"></div>
<div class="mark mark-table"></div>
</body>
</html>
```

FILE: styles.css
```css
* { box-sizing: border-box; }
html, body { margin: 0; padding: 0; background: #fff; }
body { position: relative; width: 1619px; height: 912px; overflow: hidden; font-family: "Open Sans", "Noto Sans", sans-serif; color: #333; }
i { font-style: normal; }
ul { list-style: none; margin: 0; padding: 0; }
.defs { position: absolute; }

.app { position: absolute; left: 11px; top: 7px; width: 1598px; height: 898px; display: flex; flex-direction: column; background: #f0f0f0; filter: blur(.35px); }

.titlebar { height: 22px; display: flex; align-items: center; font-size: 11.6px; color: #8a8a8a; }
.app-icon { width: 15px; height: 15px; margin-left: -2px; margin-right: 6px; flex: none; }
.title-main { width: 167px; white-space: nowrap; }
.title-project { white-space: nowrap; color: #666; font-size: 11.2px; }
.title-project s { color: #555; }

.menubar { height: 22px; background: #fff; border-bottom: 2px solid #e3242b; display: flex; align-items: center; padding-left: 1px; font-size: 12.6px; color: #333; white-space: nowrap; }
.menubar span { margin-right: 12.7px; }

.toolbar { height: 28px; flex: none; display: flex; align-items: center; padding-left: 3.5px; border-bottom: 1px solid #d9d9d9; }
.toolbar + .toolbar { height: 27px; }
.tb { width: 25px; height: 22px; flex: none; display: flex; align-items: center; justify-content: center; position: relative; }
.tb svg { width: 20px; height: 20px; }
.tb-hidden { width: 207px; flex: none; }
.tb-hidden2 { width: 193px; flex: none; }
.sep { flex: none; height: 100%; position: relative; }
.sep::before { content: ""; position: absolute; left: 4px; top: 6px; bottom: 6px; border-left: 2px dotted #b8b8b8; }
.sep::after { content: ""; position: absolute; left: 0; top: 0; bottom: 0; border-left: 1px solid #dedede; }
.s9 { width: 9px; } .s10 { width: 10px; } .s11 { width: 11px; } .s13 { width: 13px; }
.three-d { font-family: "Liberation Sans", sans-serif; font-size: 19px; line-height: 1; letter-spacing: -1px; }
.three-d .r { color: #c8202c; }
.three-d .g { color: #3e9d3e; }
.drop { flex: none; width: 14px; height: 100%; position: relative; }
.drop::after { content: ""; position: absolute; left: 2px; top: 11px; border: 4px solid transparent; border-top: 5px solid #222; border-bottom: 0; }
.num-icon small { position: absolute; top: 2px; left: 0; right: 0; text-align: center; font: bold 8px "Liberation Sans", sans-serif; color: #555; }

.work { flex: 1; display: flex; min-height: 0; }
.strip { width: 23px; flex: none; border-right: 1px solid #b5b5b5; display: flex; flex-direction: column; align-items: center; padding-right: 4px; gap: 4.3px; }
.st { width: 20px; height: 20px; flex: none; }
.grip { width: 20px; flex: none; border-top: 2px dotted #c4c4c4; margin: 1.5px 0 2px; }

.main { flex: 1; display: flex; flex-direction: column; min-width: 0; }
.upper { flex: 1; display: flex; min-height: 0; }
.panel { width: 262px; flex: none; font: 10.6px/1 "Liberation Mono", monospace; color: #444; }

.dock-head { height: 18px; display: flex; align-items: center; padding-left: 12px; white-space: nowrap; }
.vis-head { padding-top: 2px; }
.rule { flex: 1; height: 3px; background: #c4c4c4; margin-left: 1px; }
.dock-ctl { font: 11px/1 "DejaVu Sans", sans-serif; width: 15px; text-align: center; color: #333; flex: none; }

.global-row { display: flex; align-items: center; height: 20px; margin-top: 19px; padding-left: 6px; }
.global-label { width: 117px; }
.flat-btn { width: 35px; height: 20px; background: #fff; border-radius: 3px; border: 1px solid #e4e4e4; display: flex; align-items: center; justify-content: center; margin-right: 8px; }
.view-row { display: flex; align-items: center; height: 20px; margin-top: 5px; padding-left: 6px; }
.view-label { width: 117px; }
.view-field { flex: 1; height: 18px; background: #fff; border: 1px solid #e4e4e4; border-radius: 3px; margin-right: 10px; }

.layers { display: grid; grid-template-columns: 88px 25px 25px 25px; grid-template-rows: 16px repeat(4, 17.9px); align-items: center; margin-top: 17px; padding-left: 8px; }
.layers > span { display: flex; align-items: center; gap: 3px; white-space: nowrap; }
.clip { width: 23px; overflow: hidden; white-space: nowrap; letter-spacing: .3px; }
.layers-rule { height: 2px; margin: 0 95px 2px 8px; background: #b8b8b8; }
.subclasses { display: grid; grid-template-columns: 88px 25px 25px 25px; grid-template-rows: repeat(3, 16px); align-items: center; padding-left: 6px; }
.subclasses span { padding-left: 2px; height: 16px; line-height: 16px; }
.sel { background: #dcdcdc; }
.sq { width: 25px; height: 16px; display: block; position: relative; }
.sq::after { content: ""; position: absolute; left: 6px; top: 2px; width: 12px; height: 12px; background: #000; border: 1px solid #999; }

.cb { display: inline-block; flex: none; width: 13px; height: 13px; border: 1px solid #8a8a8a; border-radius: 3px; background: #f3f3f3; vertical-align: middle; }
.cb.on { background: #0b5fc4; border-color: #0b5fc4; }
.cb.on svg { display: block; width: 11px; height: 11px; }
.cb.c { justify-self: center; }
.cb.small { width: 12px; height: 12px; }

.enable-row { display: flex; align-items: center; gap: 4px; height: 14px; margin-top: 270px; padding-left: 40px; }
.wf-head { margin-top: 11px; padding-right: 9px; }
.wf-head .rule { margin-right: 4px; }
.workspace { display: flex; align-items: center; height: 16px; margin-top: 9px; padding-left: 9px; }
.workspace > span:first-child { width: 122px; }
.select { width: 116px; height: 16px; background: #fff; border-radius: 2px; padding-left: 2px; line-height: 16px; position: relative; }
.select-arrow { position: absolute; right: 4px; top: 6px; border: 3px solid transparent; border-top: 4px solid #222; border-bottom: 0; }

.workflow { margin: 6px 15px 0 9px; border: 1px solid #bdbdbd; border-width: 1px 0 0 1px; font: 12.4px/1 "Open Sans", sans-serif; color: #333; }
.workflow li { height: 20.9px; display: flex; align-items: center; justify-content: space-between; padding: 0 6px 0 2px; border-right: 2px solid #7d7d7d; border-bottom: 2px solid #8b8b8b; }
.workflow svg { width: 8px; height: 12px; }
.workflow-tail { height: 13px; margin: 0 15px 0 9px; background: #fff; border: 1px solid #bdbdbd; border-top: 0; }

.canvas-col { flex: 1; min-width: 0; display: flex; flex-direction: column; padding-right: 2px; }
.canvas-top { height: 27px; padding-left: 60px; padding-top: 6px; }
.canvas-field { display: block; width: 67px; height: 20px; background: #f8f8f8; padding-right: 11px; text-align: right; font: 10.6px/20px "Liberation Mono", monospace; }
.canvas { flex: 1; background: #000; border-top: 1px solid #c8c8c8; min-height: 0; }
.board { display: block; width: 100%; height: 100%; }
.outline { fill: none; stroke: #b0b0b0; stroke-width: 1; }
.pad { fill: none; stroke: #0fa7a7; stroke-width: 1; }

.cmdbar { height: 30px; flex: none; display: flex; font: 10.6px/1 "Liberation Mono", monospace; color: #444; }
.cmd-left { width: 1072px; height: 30px; padding-top: 5px; padding-right: 5px; }
.cmd-right { flex: 1; height: 30px; padding-top: 5px; padding-left: 15px; padding-right: 2px; }
.cmdbar .rule { height: 3px; margin-right: 3px; }

.menu-ghost { position: absolute; left: 194px; top: 13px; width: 215px; height: 114px; background: linear-gradient(rgba(255,255,255,.4), rgba(255,255,255,.4)) 0 0 / 100% 9px no-repeat, linear-gradient(rgba(255,255,255,.35), rgba(255,255,255,.35)) 201px 0 / 14px 100% no-repeat; }
.menu { position: absolute; left: 194px; top: 43px; width: 201px; height: 508px; background: #f0f0f0; padding-top: 1.4px; font-size: 12.4px; color: #3a3a3a; box-shadow: 1px 2px 4px rgba(0,0,0,.35); }
.menu::before { content: ""; position: absolute; left: 25px; top: 0; bottom: 0; border-left: 1px solid #e6e6e6; }
.mi { height: 19.4px; display: flex; align-items: center; white-space: nowrap; position: relative; }
.mic { width: 17px; height: 17px; margin: 0 10px 0 3px; flex: none; font-size: 11px; text-align: center; color: #777; }
.sub::after { content: ""; position: absolute; right: 11px; top: 6px; border: 3px solid transparent; border-left: 4px solid #222; border-right: 0; }
.msep { height: 7.1px; display: flex; align-items: center; margin-left: 25px; }
.msep::after { content: ""; display: block; width: 100%; height: 2px; background: #e4e4e4; margin-right: 3px; }
.mi.active { background: #90c8f6; margin: 0 1px; height: 21px; }
.mi.active .mic { margin-left: 2px; }

.dialog { position: absolute; left: 922px; top: 214px; width: 547px; height: 588px; background: #f0f0f0; border-radius: 8px; overflow: hidden; font: 8.3px/1 "Liberation Sans", sans-serif; color: #333; display: flex; flex-direction: column; filter: blur(.3px); }
.dlg-title { height: 29px; flex: none; background: #f3f5ee; display: flex; align-items: center; font: 12px/1 "Open Sans", sans-serif; color: #333; padding-left: 7px; }
.dlg-logo { width: 16px; height: 16px; margin-right: 7px; }
.dlg-name { flex: 1; }
.win-btn { width: 45px; height: 29px; display: flex; align-items: center; justify-content: center; position: relative; font-size: 13px; color: #222; }
.min::after { content: ""; width: 10px; height: 1px; background: #333; }
.max::after { content: ""; width: 10px; height: 10px; border: 1px solid #ccc; }
.close { font-family: "DejaVu Sans", sans-serif; font-size: 13px; margin-right: 1px; }
.dlg-body { flex: 1; padding: 6px 3px 0 6px; }
.dlg-top { display: flex; gap: 5px; height: 405px; }
.group { margin: 0; padding: 0 5px; border: 1px solid #e4e4e4; min-width: 0; }
.group legend { padding: 0; margin-left: 1px; line-height: 10px; font-size: 8.4px; color: #444; }
.cats { width: 140px; height: 405px; }
.prefs { width: 392px; height: 405px; }

.tree { margin-top: 14px; width: 123px; height: 306px; border: 2px solid #b4b4b4; border-right-color: #c8c8c8; border-bottom-color: #c8c8c8; display: flex; flex-direction: column; background: #f0f0f0; }
.tree-top { display: flex; height: 286px; }
.tree-list { width: 102px; height: 286px; background: #fff; overflow: hidden; flex: none; }
.tree-list li { height: 12.8px; display: flex; align-items: center; white-space: nowrap; color: #333; }
.tree-list svg { width: 13px; height: 11px; margin-right: 4px; flex: none; }
.tree-list .lv2 { padding-left: 15px; }
.picked span { background: #efefef; padding-right: 2px; }
.tx { width: 17px; height: 100%; flex: none; position: relative; }
.tx::before { content: ""; position: absolute; left: 8px; top: 50%; right: 0; border-top: 1px dotted #aaa; }
.tx::after { content: ""; position: absolute; left: 8px; top: 0; bottom: 0; border-left: 1px dotted #aaa; }
.plus::after, .minus::after { left: 4px; top: 2px; bottom: auto; width: 9px; height: 9px; border: 1px solid #a8aec4; background: linear-gradient(#4a62b0, #4a62b0) center / 5px 1px no-repeat #fff; }
.plus::after { background: linear-gradient(#4a62b0, #4a62b0) center / 5px 1px no-repeat, linear-gradient(#4a62b0, #4a62b0) center / 1px 5px no-repeat, #fff; }
.vscroll { width: 17px; padding: 16px 0 0 6px; }
.vscroll i { display: block; width: 5px; height: 214px; background: #a2a2a2; }
.hscroll { padding: 4px 0 0 17px; }
.hscroll i { display: block; width: 67px; height: 5px; background: #a2a2a2; }

.search-label { margin-top: 13px; height: 12px; line-height: 12px; }
.search-row { display: flex; margin-top: 6px; align-items: center; }
.search-input { width: 73px; height: 16px; margin-left: 1px; background: #fff; border: 1px solid #bdbdbd; border-width: 1px 1px 2px 1px; }
.btn { background: #fff; border: 1px solid #e6e6e6; border-radius: 2px; display: flex; align-items: center; justify-content: center; box-shadow: 0 1px 1px rgba(0,0,0,.08); }
.search-btn { width: 37px; height: 16px; margin-left: 12px; }
.include { display: flex; align-items: center; gap: 5px; margin-top: 3px; }

.pref-grid { display: grid; grid-template-columns: 146px 116px 61px 30px; grid-auto-rows: 19.2px; align-items: center; margin: 13.5px 0 0 1px; }
.pref-grid b { font-weight: bold; font-size: 9.4px; color: #222; white-space: nowrap; }
.pref-grid .fav-h { margin-left: -11px; }
.val-h { margin-left: -2px; }
.dots { width: 25px; height: 16px; color: #777; }
.pref-grid .cb { margin-top: -2px; }

.summary { height: 79px; margin-top: 7px; }
.summary p { margin: 6px 0 0 5px; line-height: 10.5px; font-size: 8.3px; }
.dlg-buttons { display: flex; margin-top: 23px; padding: 0 0 0 7px; gap: 35px; }
.dlg-buttons .btn { width: 49px; height: 16px; font-size: 8.6px; flex: none; }
.dlg-buttons .push { margin-left: 56px; }
.dlg-status { height: 18px; flex: none; border-top: 1px solid #e0e0e0; padding-left: 21px; }
.dlg-status i { display: block; width: 1px; height: 100%; background: #dcdcdc; }

.mark { position: absolute; border: 3px solid #ed1c24; pointer-events: none; }
.mark-setup { left: 208px; top: 27px; width: 39px; height: 26px; }
.mark-user { left: 212px; top: 537px; width: 194px; height: 21px; }
.mark-paths { left: 921px; top: 438px; width: 146px; height: 18px; }
.mark-library { left: 964px; top: 478px; width: 64px; height: 17px; }
.mark-table { left: 1075px; top: 242px; width: 371px; height: 295px; }
```
